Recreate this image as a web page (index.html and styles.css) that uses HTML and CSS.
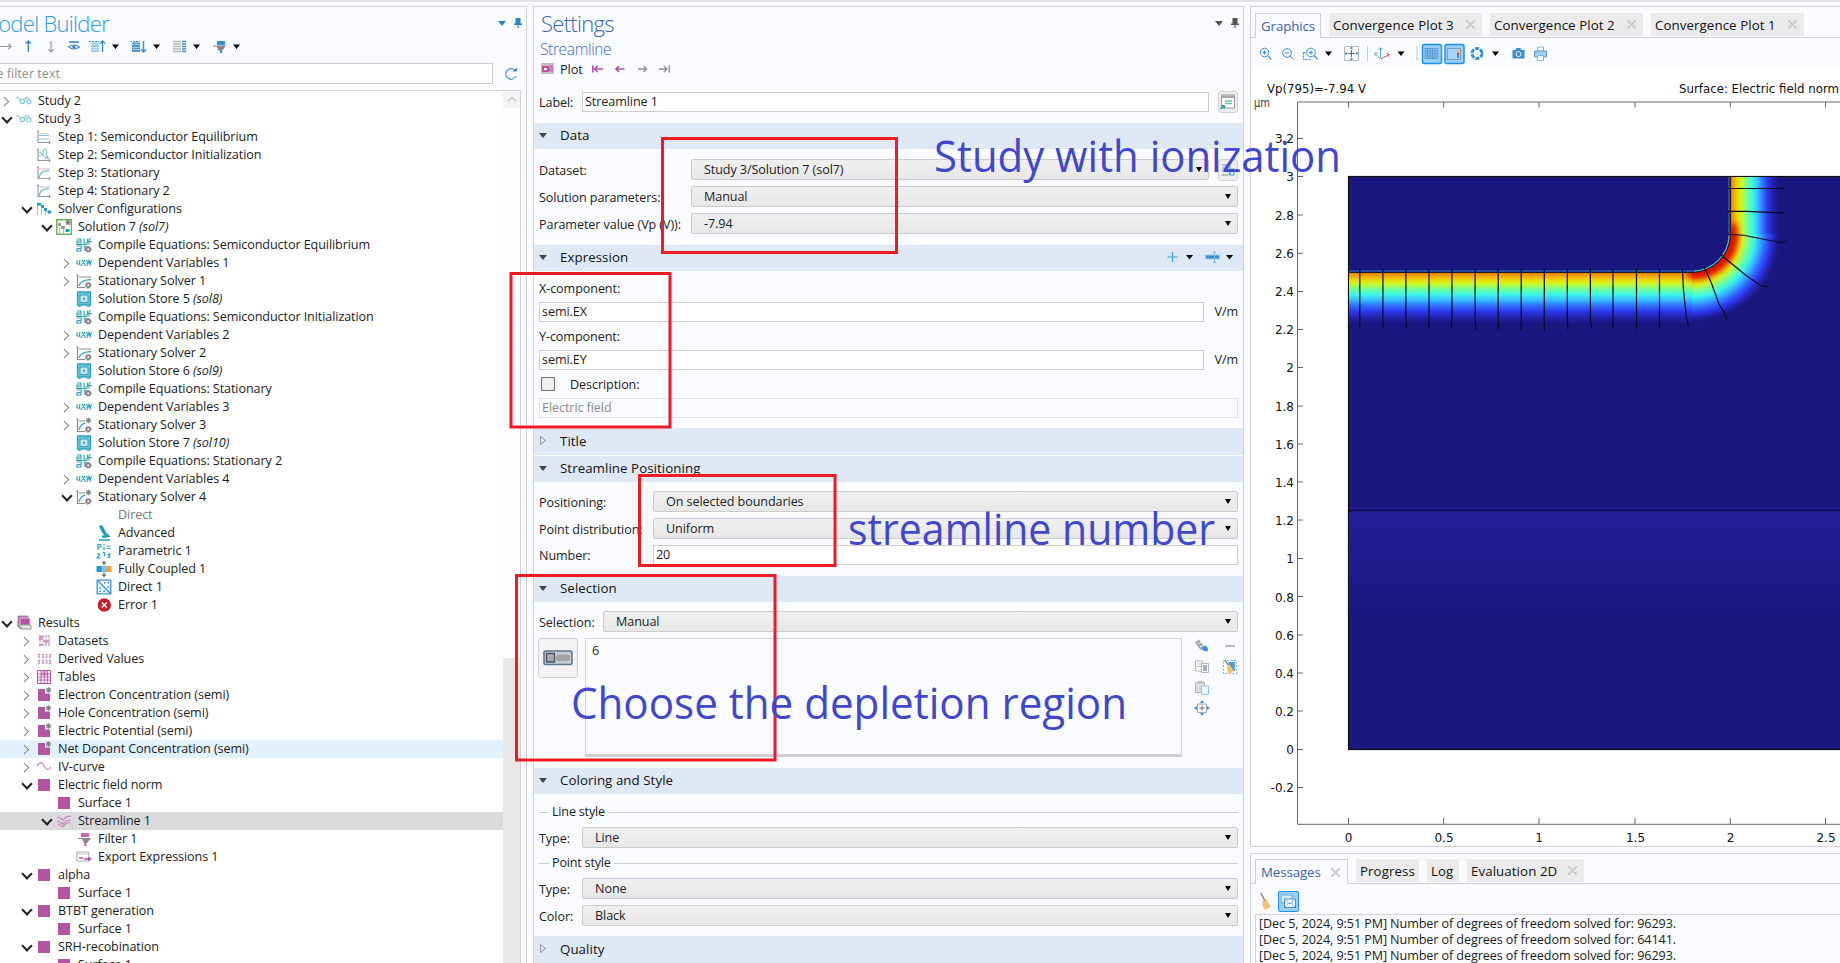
FILE: index.html
```html
<!DOCTYPE html>
<html lang="en">
<head>
<meta charset="utf-8">
<title>Model Builder</title>
<link rel="stylesheet" href="styles.css">
</head>
<body>
<svg class="defs" width="0" height="0" aria-hidden="true">
  <defs>
    <symbol id="study" viewBox="0 0 16 16"><path d="M.5 5.500C2 3.500 3.500 5 4.500 8M8.500 8.500a2.100 2.100 0 1 1-4.200 0a2.100 2.100 0 1 1 4.200 0zM8.500 8.500C9 5 10 3.800 11.500 4.500S12.500 7 10.500 7.500M15 8.800a2.200 2.200 0 1 1-4.400 0a2.200 2.200 0 1 1 4.400 0z" fill="none" stroke="#7cc6dc" stroke-width="1.100"/></symbol>
    <symbol id="ax" viewBox="0 0 16 16"><path d="M2 1.500v12h12.500M1 2.500h2M13.500 12v3" fill="none" stroke="#999" stroke-width="1.100"/></symbol>
    <symbol id="step1" viewBox="0 0 16 16"><use href="#ax"/><path d="M3 6.500h10M3 10h10" stroke="#7cc5da" stroke-width="1.200"/><path d="M3 4.500h9" stroke="#ccc" stroke-width=".8"/></symbol>
    <symbol id="step2" viewBox="0 0 16 16"><use href="#ax"/><path d="M3 5c4 0 3 6 9 6M3 9c5 0 4-7 6-7s1 9 4 10" fill="none" stroke="#5fb4cd" stroke-width="1"/></symbol>
    <symbol id="step3" viewBox="0 0 16 16"><use href="#ax"/><path d="M3 4h11" stroke="#bbb"/><path d="M3 13c1-5 3-7 10-7.500" fill="none" stroke="#5fb4cd" stroke-width="1.200"/></symbol>
    <symbol id="conf" viewBox="0 0 16 16"><path d="M1.500 4v10M5.500 7v7M9.500 10v4" stroke="#bbb" stroke-width="1" fill="none"/><path d="M1 2h4v2.500H1zM5 4h3v3H5zM8 7h3v3H8zM11.500 9.500H15v3h-3.500z" fill="#1f9db8"/></symbol>
    <symbol id="gear" viewBox="0 0 8 8"><circle cx="4" cy="4" r="2" fill="none" stroke="#808080" stroke-width="1.800"/><circle cx="4" cy="4" r="3.300" fill="none" stroke="#808080" stroke-width="1" stroke-dasharray="1.300 1.290"/></symbol>
    <symbol id="burst" viewBox="0 0 8 8"><path d="M4 .8v6.400M.8 4h6.400M1.700 1.700l4.600 4.600M6.300 1.700L1.700 6.300" stroke="#808080" stroke-width="1.200"/></symbol>
    <symbol id="sol" viewBox="0 0 16 16"><path d="M.7.700h14.600v14.600H.7z" fill="#fff" stroke="#67b556" stroke-width="1.400"/><path d="M2 4h3v3H2zM5 7h4v3H5z" fill="#999"/><path d="M9.500 10h4v3h-4z" fill="#1f9db8"/><path d="M3.500 8v6M7.500 10v4" stroke="#bbb"/><use href="#burst" x="8.500" y="0" width="7" height="7"/></symbol>
    <symbol id="comp" viewBox="0 0 16 16"><path d="M1 2h4v4H1V4h4M8 1.500v4.500h3.500V1.500M1 9h4v5H1v-2.500h4M9 8.500v5h2M7.500 10h4M0 7.500h11M13 7.500V3q0-1.500 2-1.500M12 4.500h4" fill="none" stroke="#2c9fbc" stroke-width="1.100"/><use href="#gear" x="8.500" y="8.500" width="7.500" height="7.500"/></symbol>
    <symbol id="uvw" viewBox="0 0 16 16"><path d="M1 5v3.500q1.200 1.500 2.700 0V5v4.500M5.500 9.500l-.6 1.500M6 5l3 4.500M9 5L6 9.500M10 9.500l-.6 1.500M10.500 5l1.200 4.500 1.300-4 1.300 4L15.500 5" fill="none" stroke="#2c9fbc" stroke-width="1.200"/></symbol>
    <symbol id="stat" viewBox="0 0 16 16"><path d="M1.500 1v13.500H9M.5 2.500h2M3 4h12" fill="none" stroke="#8c8c8c" stroke-width="1.200"/><path d="M3 13c1-4 4-6 12-6.500" fill="none" stroke="#4aabc6" stroke-width="1.400"/><use href="#gear" x="8.500" y="8.500" width="7.500" height="7.500"/></symbol>
    <symbol id="stat2" viewBox="0 0 16 16"><path d="M1.500 1v13.500H9M.5 2.500h2M3 4h6" fill="none" stroke="#8c8c8c" stroke-width="1.200"/><path d="M3 13c1-4 3-6 6-7" fill="none" stroke="#4aabc6" stroke-width="1.400"/><use href="#gear" x="8.500" y="8.500" width="7.500" height="7.500"/><use href="#burst" x="9" y="0" width="7" height="7"/></symbol>
    <symbol id="store" viewBox="0 0 16 16"><path d="M1.500 1h13v13h-13z" fill="#6fc2d8" stroke="#2fa3bd" stroke-width="1.300"/><path d="M4 4h8v7.500H4z" fill="#c8e8f1" stroke="#2fa3bd"/><path d="M8 6.500v3M7 7.500h2" stroke="#2f90bd" stroke-width="1"/><path d="M2 15.300h3M11 15.300h3" stroke="#2fa3bd"/></symbol>
    <symbol id="adv" viewBox="0 0 16 16"><path d="M3 1l3-1 1.500 2.500 4 8-2.500 1-4-6z" fill="#1f9db8"/><path d="M11 8.500q2 2-.5 3.500H6M3 15h11" fill="none" stroke="#1f9db8" stroke-width="1.500"/><path d="M6 10.500h8v1.500H6z" fill="#1f9db8"/></symbol>
    <symbol id="param" viewBox="0 0 16 16"><path d="M2 7V1.500h2.500q1 1.500 0 2.500H2M8 3.500V7M8 1v1M10.500 3h4M10.500 5.500h4M1 11q3-1 2.500 1L1 15h3.500M8.500 9v4M7 10l1.500-1M11.500 11H14l-1.500 1.500q2 .5 1 2h-2" fill="none" stroke="#2c9fbc" stroke-width="1.200"/></symbol>
    <symbol id="fully" viewBox="0 0 16 16"><path d="M.5 5h5.500v6H.5z" fill="#1f9db8"/><path d="M10 5h5.500v6H10z" fill="#f5a03a"/><path d="M5.500 5h5v6h-5z" fill="#7fc0ee"/><path d="M8 .5v4M8 11v4.500M6 2.500l2-2 2 2M6 13.500l2 2 2-2" fill="none" stroke="#777" stroke-width="1.200"/></symbol>
    <symbol id="dir" viewBox="0 0 16 16"><path d="M1.200 1.200h13.600v13.600H1.200z" fill="#eaf5fd" stroke="#3b8fd0" stroke-width="1.300"/><path d="M1.500 1.500l13 13" stroke="#3b8fd0" stroke-width="1.300"/><path d="M8 3h1.500v1.500H8zM11.500 3H13v1.500h-1.500zM11.500 7H13v1.500h-1.500zM3.500 8H5v1.500H3.500zM3.500 11.500H5V13H3.500zM7.500 11.500H9V13H7.500z" fill="#3b8fd0"/></symbol>
    <symbol id="err" viewBox="0 0 16 16"><circle cx="8.300" cy="8" r="6.700" fill="#c5202e"/><path d="M5.800 5.500l5 5M10.800 5.500l-5 5" stroke="#fff" stroke-width="1.500"/></symbol>
    <symbol id="results" viewBox="0 0 16 16"><path d="M2 1h10v7H2z" fill="#c76bb8" stroke="#8c8c8c" stroke-width=".8"/><path d="M4 3h10v7H4z" fill="#b552a3" stroke="#ddd" stroke-width=".8"/><path d="M1 7l4 3h10v4H6z" fill="#e8e8e8" stroke="#888" stroke-width=".9"/><path d="M1 8l5 6h-2L1 11z" fill="#999"/></symbol>
    <symbol id="data" viewBox="0 0 16 16"><path d="M4 2v12M7 2v12M10 2v12M13 2v12" stroke="#b9a5b8" stroke-width="1.400" stroke-dasharray="3 1"/><path d="M3 3h4v4H3zM8 7h5v3H8zM3 11h4v2H3z" fill="#c983be" opacity=".75"/></symbol>
    <symbol id="deriv" viewBox="0 0 16 16"><path d="M3 3v4M7 3v4M10.500 3v4M14 3v4M3 9v4M7 9v4M10.500 9v4M14 9v4" stroke="#c983be" stroke-width="2" stroke-dasharray="1.500 .8"/></symbol>
    <symbol id="table" viewBox="0 0 16 16"><path d="M1.500 1.500h13v13h-13z" fill="#fff" stroke="#b552a3"/><path d="M5 2h7v5H5z" fill="#e2b7db"/><path d="M5 1.500v13M8.300 1.500v13M11.600 1.500v13M1.500 5h13M1.500 8h13M1.500 11h13" stroke="#b552a3" stroke-width=".9"/></symbol>
    <symbol id="sq" viewBox="0 0 16 16"><path d="M2 2h12v12H2z" fill="#b455a3"/></symbol>
    <symbol id="sqs" viewBox="0 0 16 16"><path d="M2 2h7v4.500h5V14H2z" fill="#b455a3"/><use href="#burst" x="9" y="-.5" width="7" height="7"/></symbol>
    <symbol id="wave" viewBox="0 0 16 16"><path d="M1 7c3-5 5-4 7 0s4 5 7 1" fill="none" stroke="#c983be" stroke-width="1.100"/></symbol>
    <symbol id="stream" viewBox="0 0 16 16"><path d="M1 4l3 1 3 2 3-3 5-1M1 8l3 1 3 2 3-3 5-1M2 11l3 1.500 2 1 3-3 4-1" fill="none" stroke="#c983be" stroke-width="1.200"/></symbol>
    <symbol id="filt" viewBox="0 0 16 16"><path d="M5 2h8v4H5z" fill="#c46ab5"/><path d="M2 7h13l-4 5H8L6 8H2z" fill="#8a8a8a"/><path d="M8.500 11h1.800v4H8.500z" fill="#b455a3"/></symbol>
    <symbol id="expo" viewBox="0 0 16 16"><path d="M.8 3h12v9H.8z" fill="#fff" stroke="#aaa"/><path d="M1 5h12" stroke="#bbb"/><path d="M3 9h4M8 10h6" stroke="#b455a3" stroke-width="1.500"/><path d="M12 7.500l4 2.500-4 2.500z" fill="#b455a3"/></symbol>
    <symbol id="pin" viewBox="0 0 8 12"><path d="M1.500 1h5v5.500H8v1.500H4.600V11H3.500V8H0V6.500h1.500z" fill="currentColor"/></symbol>
    <symbol id="zin" viewBox="0 0 14 14"><circle cx="6" cy="6" r="4.300" fill="none" stroke="#3d8fcc"/><path d="M9 9l3.800 3.800M4 6h4M6 4v4" stroke="#3d8fcc" stroke-width="1.100"/></symbol>
    <symbol id="broom" viewBox="0 0 12 18"><path d="M2 1l4 8" stroke="#777" stroke-width="1.300"/><path d="M4 9l3-1.500 4 7-5 3-2-4z" fill="#f8c376" stroke="#eaa850" stroke-width=".6"/></symbol>
  </defs>
</svg>

<main class="app">
  <section class="panel builder">
    <header class="head">
      <h1 class="title title-builder"><span>Model Builder</span></h1>
      <span class="wincontrols blue"><i class="caret"></i><svg width="8" height="12"><use href="#pin"/></svg></span>
    </header>
    <svg class="buildertools" width="526" height="20" viewBox="0 36 526 20">
      <g fill="none" stroke-width="1.200">
        <path d="M0 46.500h11M8.500 44l2.500 2.500-2.500 2.500M51 41v11M48.500 49.500l2.500 2.500 2.500-2.500" stroke="#999"/>
        <path d="M28.300 52V41M25.800 43.500l2.500-2.500 2.500 2.500" stroke="#3b8fd0" stroke-width="1.500"/>
        <path d="M69 42h10" stroke="#3b8fd0" stroke-width="1.600"/><path d="M68.500 47q5.500-4 11 0q-5.500 4-11 0z" stroke="#3b8fd0"/>
        <path d="M102.500 52V41M100 43.500l2.500-2.500 2.500 2.500M143.500 41v11M141 49.500l2.500 2.500 2.500-2.500" stroke="#3b8fd0" stroke-width="1.500"/>
        <path d="M89 41.500h10M130 41.500h10" stroke="#3b8fd0" stroke-width="1.200" stroke-dasharray="2 1"/>
      </g>
      <circle cx="74" cy="47" r="1.800" fill="#3b8fd0"/>
      <path d="M91 43.500h8M91 46h8M91 48.500h8M91 51h8" stroke="#9fcbea" stroke-width="2"/>
      <path d="M132 43.500h8M132 46h8M132 48.500h8M132 51h8" stroke="#4b98d2" stroke-width="2"/>
      <path d="M173 41.500h8M173 44h8M173 46.500h8M173 49h8M173 51.500h8" stroke="#b8b8b8" stroke-width="1.500"/><path d="M182 41.500h4M182 44h4M182 46.500h4M182 49h4M182 51.500h4" stroke="#3b8fd0" stroke-width="1.500"/>
      <path d="M217 41h8v4h-8z" fill="#3b8fd0"/><path d="M213 45.500h13l-3.500 5h-4l-2-4h-3.500z" fill="#888"/><path d="M220 50h2v3h-2z" fill="#3b8fd0"/>
      <path d="M112 44.500h7l-3.500 4.500zM153 44.500h7l-3.500 4.500zM193 44.500h7l-3.500 4.500zM233 44.500h7l-3.500 4.500z" fill="#000"/>
    </svg>
    <div class="searchrow">
      <div class="search"><span>Type filter text</span></div>
      <svg width="14" height="14" viewBox="0 0 14 14"><path d="M11.500 4A5.300 5.300 0 1 0 12 9" fill="none" stroke="#4b98d2" stroke-width="1.200"/><path d="M8.500 4.500h4.300V.5z" fill="#2a7fc4"/></svg>
    </div>
    <div class="treebox">
      <div class="tree">
        <div class="row"><i class="chev"></i><svg><use href="#study"/></svg>Study 2</div>
        <div class="row"><i class="chev open"></i><svg><use href="#study"/></svg>Study 3</div>
        <div class="row l1"><i></i><svg><use href="#step1"/></svg>Step 1: Semiconductor Equilibrium</div>
        <div class="row l1"><i></i><svg><use href="#step2"/></svg>Step 2: Semiconductor Initialization</div>
        <div class="row l1"><i></i><svg><use href="#step3"/></svg>Step 3: Stationary</div>
        <div class="row l1"><i></i><svg><use href="#step3"/></svg>Step 4: Stationary 2</div>
        <div class="row l1"><i class="chev open"></i><svg><use href="#conf"/></svg>Solver Configurations</div>
        <div class="row l2"><i class="chev open"></i><svg><use href="#sol"/></svg>Solution 7 <em>(sol7)</em></div>
        <div class="row l3"><i></i><svg><use href="#comp"/></svg>Compile Equations: Semiconductor Equilibrium</div>
        <div class="row l3"><i class="chev"></i><svg><use href="#uvw"/></svg>Dependent Variables 1</div>
        <div class="row l3"><i class="chev"></i><svg><use href="#stat"/></svg>Stationary Solver 1</div>
        <div class="row l3"><i></i><svg><use href="#store"/></svg>Solution Store 5 <em>(sol8)</em></div>
        <div class="row l3"><i></i><svg><use href="#comp"/></svg>Compile Equations: Semiconductor Initialization</div>
        <div class="row l3"><i class="chev"></i><svg><use href="#uvw"/></svg>Dependent Variables 2</div>
        <div class="row l3"><i class="chev"></i><svg><use href="#stat"/></svg>Stationary Solver 2</div>
        <div class="row l3"><i></i><svg><use href="#store"/></svg>Solution Store 6 <em>(sol9)</em></div>
        <div class="row l3"><i></i><svg><use href="#comp"/></svg>Compile Equations: Stationary</div>
        <div class="row l3"><i class="chev"></i><svg><use href="#uvw"/></svg>Dependent Variables 3</div>
        <div class="row l3"><i class="chev"></i><svg><use href="#stat2"/></svg>Stationary Solver 3</div>
        <div class="row l3"><i></i><svg><use href="#store"/></svg>Solution Store 7 <em>(sol10)</em></div>
        <div class="row l3"><i></i><svg><use href="#comp"/></svg>Compile Equations: Stationary 2</div>
        <div class="row l3"><i class="chev"></i><svg><use href="#uvw"/></svg>Dependent Variables 4</div>
        <div class="row l3"><i class="chev open"></i><svg><use href="#stat2"/></svg>Stationary Solver 4</div>
        <div class="row l4 dim"><i></i><svg></svg>Direct</div>
        <div class="row l4"><i></i><svg><use href="#adv"/></svg>Advanced</div>
        <div class="row l4"><i></i><svg><use href="#param"/></svg>Parametric 1</div>
        <div class="row l4"><i></i><svg><use href="#fully"/></svg>Fully Coupled 1</div>
        <div class="row l4"><i></i><svg><use href="#dir"/></svg>Direct 1</div>
        <div class="row l4"><i></i><svg><use href="#err"/></svg>Error 1</div>
        <div class="row"><i class="chev open"></i><svg><use href="#results"/></svg>Results</div>
        <div class="row l1"><i class="chev"></i><svg><use href="#data"/></svg>Datasets</div>
        <div class="row l1"><i class="chev"></i><svg><use href="#deriv"/></svg>Derived Values</div>
        <div class="row l1"><i class="chev"></i><svg><use href="#table"/></svg>Tables</div>
        <div class="row l1"><i class="chev"></i><svg><use href="#sqs"/></svg>Electron Concentration (semi)</div>
        <div class="row l1"><i class="chev"></i><svg><use href="#sqs"/></svg>Hole Concentration (semi)</div>
        <div class="row l1"><i class="chev"></i><svg><use href="#sqs"/></svg>Electric Potential (semi)</div>
        <div class="row l1 hover"><i class="chev"></i><svg><use href="#sqs"/></svg>Net Dopant Concentration (semi)</div>
        <div class="row l1"><i class="chev"></i><svg><use href="#wave"/></svg>IV-curve</div>
        <div class="row l1"><i class="chev open"></i><svg><use href="#sq"/></svg>Electric field norm</div>
        <div class="row l2"><i></i><svg><use href="#sq"/></svg>Surface 1</div>
        <div class="row l2 selected"><i class="chev open"></i><svg><use href="#stream"/></svg>Streamline 1</div>
        <div class="row l3"><i></i><svg><use href="#filt"/></svg>Filter 1</div>
        <div class="row l3"><i></i><svg><use href="#expo"/></svg>Export Expressions 1</div>
        <div class="row l1"><i class="chev open"></i><svg><use href="#sq"/></svg>alpha</div>
        <div class="row l2"><i></i><svg><use href="#sq"/></svg>Surface 1</div>
        <div class="row l1"><i class="chev open"></i><svg><use href="#sq"/></svg>BTBT generation</div>
        <div class="row l2"><i></i><svg><use href="#sq"/></svg>Surface 1</div>
        <div class="row l1"><i class="chev open"></i><svg><use href="#sq"/></svg>SRH-recobination</div>
        <div class="row l2"><i></i><svg><use href="#sq"/></svg>Surface 1</div>
      </div>
      <div class="scroll"><span class="scrollup"><i></i></span><span class="thumb"></span></div>
    </div>
  </section>

  <section class="panel settings">
    <header class="head">
      <h1 class="title title-settings">Settings</h1>
      <span class="wincontrols"><i class="caret"></i><svg width="8" height="12"><use href="#pin"/></svg></span>
    </header>
    <div class="subtitle">Streamline</div>
    <div class="plotrow">
      <svg width="13" height="11" viewBox="0 0 13 11"><path d="M0 0h13v11H0z" fill="#bfbfbf"/><path d="M1 3h7v6H1z" fill="#b455a3"/><path d="M3 5h3v2H3z" fill="#fff"/><path d="M8 2h4v7H8z" fill="#d27cc5"/></svg>
      <span class="plot">Plot</span>
      <svg width="80" height="10" viewBox="592 63 80 10"><g fill="none" stroke="#b455a3" stroke-width="1.700"><path d="M592.800 64.500v7M603 68h-9M597.500 65l-3 3 3 3M624.500 68h-9M619 65l-3 3 3 3"/></g><g fill="none" stroke="#8f8f8f" stroke-width="1.400"><path d="M638 68h8.500M643.500 65l3 3-3 3M659 68h8M664 65l3 3-3 3M669.300 64.500v7"/></g></svg>
    </div>
    <div class="labelrow">
      <label>Label:</label><div class="input grow">Streamline 1</div>
      <span class="btn"><svg width="16" height="16" viewBox="0 0 16 16"><path d="M1.500 1h13v13h-13z" fill="#fff" stroke="#999"/><path d="M2 1.500h12V4H2z" fill="#aaa"/><path d="M5 7h7M5 9.500h7" stroke="#63c7b0" stroke-width="1.300"/><path d="M1 11h4v4l-1.500-1.500L1 15.500 0 14.500l2.300-2z" fill="#1fa98a"/></svg></span>
    </div>

    <h2 class="sec"><i class="tri"></i>Data</h2>
    <div class="form data">
      <div class="field"><label>Dataset:</label><div class="combo">Study 3/Solution 7 (sol7)</div><span class="btn"><svg width="14" height="14" viewBox="0 0 14 14"><path d="M1 2h6M1 5h6M1 8h6M1 12h6" stroke="#aaa" stroke-width="1.500"/><path d="M4 3h5v9M9 6h4v6H8z" fill="none" stroke="#4b98d2"/></svg></span></div>
      <div class="field"><label>Solution parameters:</label><div class="combo">Manual</div></div>
      <div class="field"><label>Parameter value (Vp (V)):</label><div class="combo">-7.94</div></div>
    </div>

    <h2 class="sec"><i class="tri"></i>Expression
      <svg class="sectools" width="70" height="14" viewBox="0 0 70 14"><path d="M5.500 2v10M.500 7h10" stroke="#4b98d2" stroke-width="1.200"/><path d="M19 5h7l-3.500 4.500zM59 5h7l-3.500 4.500z" fill="#000"/><path d="M38.500 5h14v4h-14z" fill="#3b8fd0" stroke="#9ccbf0"/><path d="M47.500 2v11M46 2h3M46 12.500h3" stroke="#7ab5e0" stroke-width="1"/></svg>
    </h2>
    <div class="form expr">
      <label>X-component:</label>
      <div class="unitrow"><div class="input">semi.EX</div><span>V/m</span></div>
      <label>Y-component:</label>
      <div class="unitrow"><div class="input">semi.EY</div><span>V/m</span></div>
      <div class="checkrow"><i class="check"></i>Description:</div>
      <div class="input disabled">Electric field</div>
    </div>

    <h2 class="sec closed"><i class="tri"></i>Title</h2>
    <h2 class="sec"><i class="tri"></i>Streamline Positioning</h2>
    <div class="form pos">
      <div class="field"><label>Positioning:</label><div class="combo">On selected boundaries</div></div>
      <div class="field"><label>Point distribution:</label><div class="combo">Uniform</div></div>
      <div class="field short"><label>Number:</label><div class="input grow">20</div></div>
    </div>

    <h2 class="sec"><i class="tri"></i>Selection</h2>
    <div class="form sel">
      <div class="field"><label>Selection:</label><div class="combo">Manual</div></div>
      <div class="selarea">
        <span class="toggle"><svg width="30" height="16" viewBox="0 0 30 16"><rect x="1" y="1" width="28" height="13.500" rx="1.500" fill="#c3cdd8" stroke="#64748a" stroke-width="1.600"/><path d="M3.500 3.500h8v8.500h-8z" fill="#aaa" stroke="#475569" stroke-width="1.300"/><rect x="13" y="4.500" width="14" height="6.500" rx="3" fill="#a2a2a2"/></svg></span>
        <div class="list">6</div>
        <div class="selicons">
          <svg width="16" height="16" viewBox="0 0 16 16"><path d="M3 3l6 8" stroke="#aaa" stroke-width="5"/><path d="M2 3l3-2M4 6l4-2.500M6 9l4-2.500" stroke="#eee"/><path d="M8 9l4-1.500 2 3-.5 3-3.500-.5-2-2z" fill="#3b8fd0"/></svg>
          <svg width="16" height="16" viewBox="0 0 16 16"><path d="M3 8h10" stroke="#aaa" stroke-width="1.600"/></svg>
          <svg width="16" height="16" viewBox="0 0 16 16"><path d="M1.500 2h7v10h-7z" fill="#fff" stroke="#b5b5b5"/><path d="M3 5h4M3 7.500h4" stroke="#bbb"/><path d="M7.500 4.500h7v9h-7z" fill="#fff" stroke="#b5b5b5"/><path d="M9 7h4M9 9h4M9 11h4" stroke="#3e6ba8"/></svg>
          <svg width="16" height="16" viewBox="0 0 16 16"><path d="M1.500 1.500h13v13h-13z" fill="#fff" stroke="#6db2e8" stroke-dasharray="2 1.500"/><path d="M6 3h7v9H9z" fill="#4f9fdc"/><path d="M3 1l4 6" stroke="#777" stroke-width="1.300"/><path d="M5 7l2.500-1.500 4 6-3 4-3-2z" fill="#f8c376"/></svg>
          <svg width="16" height="16" viewBox="0 0 16 16"><path d="M1.500 2.500h9v10h-9z" fill="#ddd" stroke="#b5b5b5"/><path d="M4 1h4v2.500H4z" fill="#bbb"/><path d="M7.500 6h7v8.500h-7z" fill="#f2fafe" stroke="#8cc4ea"/></svg>
          <i></i>
          <svg width="16" height="16" viewBox="0 0 16 16"><path d="M3.500 4h9v8.500h-9z" fill="#f3f3f3" stroke="#aaa"/><path d="M8 5.500v5M5.500 8h5" stroke="#777"/><path d="M8 0l2 3H6zM8 16l2-3H6zM0 8l3-2v4zM16 8l-3-2v4z" fill="#3b8fd0"/></svg>
        </div>
      </div>
    </div>

    <h2 class="sec"><i class="tri"></i>Coloring and Style</h2>
    <div class="form style">
      <div class="group">Line style</div>
      <div class="field"><label>Type:</label><div class="combo">Line</div></div>
      <div class="group">Point style</div>
      <div class="field"><label>Type:</label><div class="combo">None</div></div>
      <div class="field"><label>Color:</label><div class="combo">Black</div></div>
    </div>
    <h2 class="sec closed"><i class="tri"></i>Quality</h2>
  </section>

  <div class="right">
    <section class="panel graphics">
      <nav class="tabs">
        <span class="tab active gt">Graphics</span>
        <span class="tab ct">Convergence Plot 3<i class="x"></i></span>
        <span class="tab ct">Convergence Plot 2<i class="x"></i></span>
        <span class="tab ct">Convergence Plot 1<i class="x"></i></span>
      </nav>
      <svg class="gtools" width="589" height="29" viewBox="1251 38 589 29">
        <use href="#zin" x="1258.500" y="46.500" width="14" height="14"/>
        <g fill="none" stroke="#3d8fcc"><circle cx="1287" cy="53" r="4.300"/><path d="M1285 53h4M1290 56l3.500 3.500"/><path d="M1303.500 52.500v7h7M1303.500 52.500h3" stroke-dasharray="2 1"/></g>
        <use href="#zin" x="1305" y="46.500" width="14" height="14"/>
        <path d="M1325 51.500h7l-3.500 4.500zM1397.500 51.500h7l-3.500 4.500zM1492 51.500h7l-3.500 4.500z" fill="#000"/>
        <path d="M1344.500 46.500h14v14h-14z" fill="none" stroke="#bbb"/><path d="M1348 53.500h7M1351.500 50v7" stroke="#666"/><path d="M1350.500 47h2v2h-2zM1350.500 58h2v2h-2zM1345 52.500h2v2h-2zM1356 52.500h2v2h-2z" fill="#3b8fd0"/>
        <path d="M1367.500 46v15M1417 46v15" stroke="#ccc"/>
        <path d="M1380.500 58V48M1378.500 50l2-2.500 2 2.500" stroke="#5ba8dd" fill="none"/><path d="M1380 58.500l-5-5M1375 56v-3h3" stroke="#6cbf7c" fill="none"/><path d="M1381 59l8-4.500M1386.500 53.500l3 .8-1.500 2.600" stroke="#d8487c" fill="none"/>
        <rect x="1422.500" y="44.500" width="19" height="19" rx="2" fill="#9acff8" stroke="#1e90ee" stroke-width="1.500"/>
        <path d="M1425 48.500h13v10h-13zM1427.500 48.500v10M1430 48.500v10M1432.500 48.500v10M1435 48.500v10M1425 51h13M1425 53.500h13M1425 56h13" fill="#8cc6f0" stroke="#4b93cc" stroke-width=".8"/>
        <rect x="1445" y="44.500" width="19" height="19" rx="2" fill="#9acff8" stroke="#1e90ee" stroke-width="1.500"/>
        <path d="M1447.500 48.500h13v11h-13z" fill="#a8d6f8" stroke="#7899b5"/><path d="M1457 50h2v3h-2z" fill="#f4a23a"/><path d="M1457 53h2v2h-2z" fill="#e33"/><path d="M1457 55h2v3h-2z" fill="#2c9fd0"/>
        <circle cx="1477" cy="53.500" r="5" fill="none" stroke="#3b8fd0" stroke-width="3" stroke-dasharray="4 1.236"/>
        <path d="M1512.500 50h3l1-2h4l1 2h3v8.500h-12z" fill="#3b8fd0"/><circle cx="1518.500" cy="54" r="2.500" fill="none" stroke="#e4f2fc"/>
        <path d="M1537.500 47h6v4h-6zM1537.500 56h6v4.500h-6z" fill="#fff" stroke="#7ab5e0"/><path d="M1534.500 51h12v6h-12z" fill="#a5cdea" stroke="#5a9fd4"/><path d="M1537.500 55.500h6v5h-6z" fill="#fff" stroke="#7ab5e0"/>
      </svg>
      <svg class="plotarea" width="589" height="778" viewBox="1251 67 589 778">
        <defs>
          <linearGradient id="gh" x1="0" x2="0" y1="272.500" y2="324" gradientUnits="userSpaceOnUse">
            <stop offset="0" stop-color="#ef7800"/><stop offset=".07" stop-color="#f3a600"/><stop offset=".15" stop-color="#ecdd08"/><stop offset=".23" stop-color="#c4fa2c"/><stop offset=".33" stop-color="#6cffa0"/><stop offset=".43" stop-color="#3cf6e6"/><stop offset=".53" stop-color="#34c0ff"/><stop offset=".63" stop-color="#3078ff"/><stop offset=".75" stop-color="#2c3aee"/><stop offset=".87" stop-color="#2422ac"/><stop offset="1" stop-color="#1a177f"/>
          </linearGradient>
          <linearGradient id="gv" x1="1730.500" x2="1779" y1="0" y2="0" gradientUnits="userSpaceOnUse">
            <stop offset="0" stop-color="#f07800"/><stop offset=".07" stop-color="#f3a600"/><stop offset=".15" stop-color="#ecdd08"/><stop offset=".24" stop-color="#c4fa2c"/><stop offset=".35" stop-color="#6cffa0"/><stop offset=".46" stop-color="#3cf6e6"/><stop offset=".56" stop-color="#34c0ff"/><stop offset=".66" stop-color="#3078ff"/><stop offset=".76" stop-color="#2c3aee"/><stop offset=".87" stop-color="#2422ac"/><stop offset="1" stop-color="#1a177f"/>
          </linearGradient>
          <radialGradient id="gr" cx="1692" cy="234" r="88" gradientUnits="userSpaceOnUse">
            <stop offset=".43" stop-color="#e03000"/><stop offset=".48" stop-color="#ee7000"/><stop offset=".53" stop-color="#f3b600"/><stop offset=".58" stop-color="#d8f31c"/><stop offset=".64" stop-color="#80ff8c"/><stop offset=".71" stop-color="#3cf6e6"/><stop offset=".77" stop-color="#34b8ff"/><stop offset=".83" stop-color="#3070ff"/><stop offset=".89" stop-color="#2c3aee"/><stop offset=".95" stop-color="#2320a8"/><stop offset="1" stop-color="#1a177f"/>
          </radialGradient>
          <linearGradient id="low" x1="0" x2="0" y1="0" y2="1"><stop offset="0" stop-color="#211f9a"/><stop offset="1" stop-color="#1a177f"/></linearGradient>
          <filter id="soft" x="-50%" y="-50%" width="200%" height="200%"><feGaussianBlur stdDeviation="3"/></filter>
          <clipPath id="outer"><path d="M1348 272.500H1692A38.500 38.500 0 0 0 1730.500 234V176.500H1840V400H1348z"/></clipPath>
        </defs>
        <rect x="1251" y="67" width="589" height="778" fill="#fff"/>
        <rect x="1348.500" y="176.500" width="500" height="573" fill="#1a177f" stroke="#111" stroke-width="1.200"/>
        <rect x="1349" y="511" width="491" height="105" fill="url(#low)"/>
        <path d="M1349 508.500H1840" stroke="#1d1b8e" stroke-width="3"/>
        <path d="M1349 510.500H1840" stroke="#0c0b40" stroke-width="1.400"/>
        <rect x="1349" y="272.500" width="343.500" height="52" fill="url(#gh)"/>
        <rect x="1730.500" y="177" width="49" height="57.500" fill="url(#gv)"/>
        <path d="M1692 272.500A38.500 38.500 0 0 0 1730.500 234H1779A87.500 87.500 0 0 1 1692 323z" fill="url(#gr)"/>
        <g clip-path="url(#outer)"><path d="M1688 274A40 40 0 0 0 1732 224" fill="none" stroke="#d80000" stroke-width="8" filter="url(#soft)"/></g>
        <path d="M1349 271H1692A37 37 0 0 0 1729 234V177" fill="none" stroke="#2a5fb0" stroke-width="1.500"/>
        <path d="M1349 272.500H1692A38.500 38.500 0 0 0 1730.500 234V177" fill="none" stroke="#181818" stroke-width="1"/>
        <path d="M1694 271.200A37 37 0 0 0 1729.200 236" fill="none" stroke="#48c8b8" stroke-width="1"/>
        <path fill="none" stroke="#0b0b20" stroke-width="1.200" d="M1359.800 269v58.500M1382.900 269v58.500M1405.900 269v50l.6 9.500M1429 269v60M1452 269v50l-.8 9.500M1475.100 269v50l1 11M1498.200 269v60.500M1521.200 269v61M1544.300 269v62M1567.300 269v50l.7 11M1590.400 269v50l1.300 9.500M1613 269v60M1636.500 269v60M1659.500 269v59M1682.400 269l1.100 21 2.700 26 2.300 11M1704 267l7 15 8 22 6 10 2 6M1720.500 254l3 3 22 18 15 10.500 7.500 1.500M1728 234l17 1.500 20 4 15 3 6-1M1727 188.500h58M1727 211.300h20l38 1.700"/>
        <path d="M1850 102H1297.500V824.300H1850" fill="none" stroke="#666"/>
        <path fill="none" stroke="#666" d="M1348.500 102v5.500M1443.700 102v5.500M1539 102v5.500M1635 102v5.500M1730.300 102v5.500M1825.500 102v5.500M1348.500 824v-6M1443.700 824v-6M1539 824v-6M1635 824v-6M1730.300 824v-6M1825.500 824v-6M1297 138.500h6M1297 176.500h6M1297 215h6M1297 253.300h6M1297 291.500h6M1297 329.500h6M1297 367.500h6M1297 406h6M1297 444h6M1297 482h6M1297 520h6M1297 558.500h6M1297 596.500h6M1297 635h6M1297 673h6M1297 711h6M1297 749.500h6M1297 787.500h6"/>
        <g class="plottext">
          <text x="1267" y="93" textLength="99" lengthAdjust="spacingAndGlyphs">Vp(795)=-7.94 V</text>
          <text x="1679" y="93" textLength="160" lengthAdjust="spacingAndGlyphs">Surface: Electric field norm</text>
          <text x="1254" y="107" textLength="16" lengthAdjust="spacingAndGlyphs" fill="#444">µm</text>
          <g text-anchor="end">
            <text x="1294" y="143">3.2</text><text x="1294" y="181">3</text><text x="1294" y="219.500">2.8</text><text x="1294" y="257.500">2.6</text><text x="1294" y="296">2.4</text><text x="1294" y="334">2.2</text><text x="1294" y="372">2</text><text x="1294" y="410.500">1.8</text><text x="1294" y="448.500">1.6</text><text x="1294" y="486.500">1.4</text><text x="1294" y="525">1.2</text><text x="1294" y="563">1</text><text x="1294" y="601.500">0.8</text><text x="1294" y="639.500">0.6</text><text x="1294" y="677.500">0.4</text><text x="1294" y="715.500">0.2</text><text x="1294" y="754">0</text><text x="1294" y="792">-0.2</text>
          </g>
          <g text-anchor="middle">
            <text x="1348.500" y="841.500">0</text><text x="1444" y="841.500">0.5</text><text x="1539" y="841.500">1</text><text x="1635.500" y="841.500">1.5</text><text x="1730.500" y="841.500">2</text><text x="1826" y="841.500">2.5</text>
          </g>
        </g>
      </svg>
    </section>
    <section class="panel messages">
      <nav class="tabs">
        <span class="tab active mt">Messages<i class="x"></i></span>
        <span class="tab pt">Progress</span>
        <span class="tab lt">Log</span>
        <span class="tab et">Evaluation 2D<i class="x"></i></span>
      </nav>
      <div class="mtools">
        <svg width="12" height="18"><use href="#broom"/></svg>
        <span class="mailbtn"><svg width="17" height="15" viewBox="0 0 17 15"><path d="M1 1h11v8H1z" fill="#d9ecfa" stroke="#6ba6d4"/><path d="M4.500 5h11v8.500h-11z" fill="#fff" stroke="#4a90c8"/><path d="M4.500 5l5.500 5 5.500-5M4.500 13.500l4-4.500M15.500 13.500l-4-4.500" fill="none" stroke="#4a90c8" stroke-width=".8"/></svg></span>
      </div>
      <div class="log">
        <p>[Dec 5, 2024, 9:51 PM] Number of degrees of freedom solved for: 96293.</p>
        <p>[Dec 5, 2024, 9:51 PM] Number of degrees of freedom solved for: 64141.</p>
        <p>[Dec 5, 2024, 9:51 PM] Number of degrees of freedom solved for: 96293.</p>
      </div>
    </section>
  </div>
</main>

<svg class="notes" width="1840" height="963" viewBox="0 0 1840 963">
  <g fill="none" stroke="#ed1c24" stroke-width="3">
    <rect x="662.500" y="138.500" width="234" height="114"/>
    <rect x="511" y="273.500" width="159" height="153.500"/>
    <rect x="639.500" y="475.500" width="195.500" height="90"/>
    <rect x="516.500" y="575.500" width="258.500" height="184.500"/>
  </g>
  <g class="notetext">
    <text x="934" y="171.500" textLength="407" lengthAdjust="spacingAndGlyphs">Study with ionization</text>
    <text x="848" y="544.500" textLength="367" lengthAdjust="spacingAndGlyphs">streamline number</text>
    <text x="571" y="719" textLength="556" lengthAdjust="spacingAndGlyphs">Choose the depletion region</text>
  </g>
</svg>
</body>
</html>
```

FILE: styles.css
```css
* { box-sizing: border-box; margin: 0; padding: 0; }
body {
  width: 1840px; height: 963px; overflow: hidden; position: relative;
  background: #fafbff; color: #1c1c1c;
  font: 12.600px/18px "Open Sans", "Noto Sans", sans-serif; letter-spacing: -0.090px;
}
.defs { position: absolute; }
.app {
  display: grid; grid-template-columns: 527px 711px 590px; grid-template-rows: 957px; column-gap: 6px;
  height: 963px; padding-top: 4px; border-top: 2px solid #e2e3e6;
}
.panel { border: 1px solid #cfd3d9; background: #fafbff; overflow: hidden; }
.builder { border-left: 0; border-bottom: 0; display: flex; flex-direction: column; }
.settings { border-bottom: 0; }

.head { display: flex; justify-content: space-between; height: 31px; flex: none; }
.title { font-size: 22px; line-height: 33px; font-weight: 300; letter-spacing: -0.700px; white-space: nowrap; }
.title-builder { width: 109px; color: #2f9bea; display: flex; justify-content: flex-end; }
.title-settings { color: #3a66a8; padding-left: 7px; }
.wincontrols { display: flex; gap: 8px; align-items: center; height: 32px; padding-right: 4px; color: #555; }
.wincontrols.blue { color: #2e86c8; }
.caret { border: 4px solid transparent; border-top: 5px solid currentColor; border-bottom: 0; }
.buildertools { display: block; margin-top: -2px; height: 20px; flex: none; }

.searchrow { display: flex; align-items: center; gap: 11px; margin-top: 7px; height: 21px; flex: none; }
.search { width: 493px; height: 21px; border: 1px solid #ccc; border-left: 0; background: #fff; color: #8f8f8f; line-height: 20px; }
.search span { width: 60px; height: 19px; display: flex; justify-content: flex-end; white-space: nowrap; letter-spacing: 0; }

.treebox { display: flex; width: 521px; margin-top: 6px; flex: 1; min-height: 0; overflow: hidden; border: 1px solid #cfd3d9; border-left: 0; border-bottom: 0; background: #fff; }
.tree { width: 503px; flex: none; padding-top: 1px; }
.row { display: flex; align-items: center; height: 18px; white-space: pre; }
.row > i { width: 16px; height: 18px; flex: none; display: flex; align-items: center; padding-left: 0; }
.row > svg { width: 16px; height: 16px; margin-right: 6px; flex: none; }
.l1 { padding-left: 20px; } .l2 { padding-left: 40px; } .l3 { padding-left: 60px; } .l4 { padding-left: 80px; }
.chev::before { content: ""; width: 5.500px; height: 5.500px; margin-left: 1px; border: solid #777; border-width: 1.500px 1.500px 0 0; transform: rotate(45deg); }
.chev.open::before { border-color: #222; margin-left: 3px; margin-top: -3px; width: 6px; height: 6px; border-width: 2px 2px 0 0; transform: rotate(135deg); }
.dim { color: #777; }
.hover { background: #e2f1fe; }
.selected { background: #dadadc; }
.scroll { width: 17px; background: #fdfdfd; display: flex; flex-direction: column; justify-content: space-between; }
.scrollup { height: 17px; background: #f3f3f3; display: flex; justify-content: center; align-items: center; }
.scrollup i { width: 6px; height: 6px; border: solid #bbb; border-width: 1px 0 0 1px; transform: rotate(45deg); margin-top: 3px; }
.thumb { height: 305px; background: #e8e8e8; }

.subtitle { height: 20px; padding-left: 6px; font-size: 15.500px; line-height: 23px; font-weight: 300; color: #3f6cb5; letter-spacing: -0.350px; }
.plotrow { display: flex; align-items: center; height: 20px; padding: 1px 0 0 7px; }
.plot { margin: 0 10px 0 6px; font-size: 12.800px; width: 22px; }
.labelrow { display: flex; align-items: center; height: 22px; margin: 13px 5px 10px 5px; }
.labelrow label { width: 43px; }
.grow { flex: 1; }
.input { height: 20px; border: 1px solid #cdcdcd; background: #fff; padding-left: 2px; line-height: 18px; }
.input.disabled { background: #fafbff; border-color: #e3e4e8; color: #8a8a8a; }
.btn { width: 20px; height: 22px; margin-left: 9px; border: 1px solid #d2d2d2; border-radius: 3px; background: #ededee; display: flex; align-items: center; justify-content: center; flex: none; }
.sec { display: flex; align-items: center; height: 26px; background: #dfe9f5; font-size: 13.300px; font-weight: 400; line-height: 24px; padding: 0 6px 2px 5px; letter-spacing: 0.060px; color: #111; }
.tri { width: 8px; margin-right: 13px; flex: none; border: 4px solid transparent; border-top: 5px solid #444; border-bottom: 0; }
.sec.closed { height: 27px; margin-bottom: 1px; }
.sec.closed .tri { width: 6px; height: 10px; margin-left: 1px; margin-right: 14px; border: 0; background: #999; clip-path: polygon(0 0, 100% 50%, 0 100%, 0 0, 1px 2px, 1px 8px, 4.500px 50%, 1px 2px); }
.sectools { margin-left: auto; }

.form { padding: 9px 5px 11px; display: flex; flex-direction: column; gap: 6px; }
.form label, .labelrow label { line-height: 19px; padding-top: 1px; }
.field { display: flex; align-items: center; height: 21px; }
.field label { flex: none; white-space: nowrap; }
.field .btn { margin-left: 9px; }
.field.short { height: 20px; }
.combo { flex: 1; height: 21px; border: 1px solid #cbcbcd; border-radius: 2px; background: linear-gradient(#f0f0f1, #e7e7e7); padding: 0 6px 0 12px; line-height: 20px; display: flex; justify-content: space-between; align-items: center; }
.combo::after { content: ""; border: 3.500px solid transparent; border-top: 5px solid #000; border-bottom: 0; }
.data { padding-top: 10px; }
.data label { width: 152px; }
.expr { padding: 8px 5px 10px; gap: 5px; }
.expr label, .checkrow { height: 18px; }
.expr label { padding-top: 0; }
.unitrow { display: flex; justify-content: space-between; line-height: 20px; }
.unitrow .input { width: 665px; }
.checkrow { display: flex; align-items: center; padding-left: 2px; gap: 15px; line-height: 19px; }
.check { width: 14px; height: 14px; border: 1px solid #777; background: #f0f0f0; }
.pos label { width: 114px; }
.sel label { width: 64px; }
.selarea { display: flex; height: 119px; }
.toggle { width: 40px; height: 40px; margin-left: -1px; border: 1px solid #d0d0d2; border-radius: 3px; background: #f3f3f4; display: flex; align-items: center; justify-content: center; margin-right: 7px; }
.list { width: 597px; height: 119px; border: 1px solid #d0d2d6; border-bottom: 3px solid #cfcfd1; padding: 3px 6px; }
.selicons { display: grid; grid-template-columns: 16px 16px; column-gap: 12px; grid-auto-rows: 16px; row-gap: 4.800px; margin-left: 12px; align-content: start; }
.style { padding-bottom: 10px; }
.style label { width: 43px; }
.group { display: flex; align-items: center; gap: 3px; height: 18px; letter-spacing: -0.200px; }
.group::before { content: ""; width: 10px; height: 1px; background: #ccced2; }
.group::after { content: ""; flex: 1; height: 1px; background: #ccced2; }

.right { display: grid; grid-template-rows: 841px 1fr; row-gap: 6px; min-width: 0; }
.right .panel { border-right: 0; }
.tabs { display: flex; height: 31px; align-items: flex-end; border-bottom: 1px solid #cfd3d9; padding-left: 4px; }
.tab { height: 23px; margin-bottom: 1px; background: #ebebeb; font-size: 13.300px; line-height: 22px; padding-left: 4px; letter-spacing: 0.080px; color: #111; display: flex; align-items: center; white-space: nowrap; margin-right: 8px; }
.tab.active { height: 25px; margin-bottom: -1px; background: #fafbff; border: 1px solid #cfd3d9; border-bottom: 0; color: #3a62a5; line-height: 26px; padding-left: 5px; letter-spacing: -0.100px; }
.gt { width: 66px; } .ct { width: 153px; } .mt { width: 93px; } .pt { width: 63px; } .lt { width: 32px; } .et { width: 117px; }
.x { width: 9px; height: 9px; margin-left: auto; margin-right: 7px; background: linear-gradient(45deg, transparent 43%, #c9ced6 43%, #c9ced6 57%, transparent 57%), linear-gradient(-45deg, transparent 43%, #c9ced6 43%, #c9ced6 57%, transparent 57%); }
.gtools, .plotarea { display: block; }
.plottext { font: 12px "DejaVu Sans", "Noto Sans", sans-serif; letter-spacing: 0; fill: #111; }
.messages { border-bottom: 0; }
.messages .tabs { height: 30px; }
.mtools { display: flex; align-items: center; gap: 6px; height: 30px; padding: 4px 0 0 8px; }
.mailbtn { width: 21px; height: 21px; margin-left: 1px; border: 1.500px solid #1e90ee; border-radius: 2px; background: #9acff8; display: flex; align-items: center; justify-content: center; }
.log { margin-left: 4px; border: 1px solid #cfd3d9; border-right: 0; height: 60px; padding-left: 3px; }
.log p { height: 16px; line-height: 18px; white-space: nowrap; }

.notes { position: absolute; left: 0; top: 0; pointer-events: none; }
.notetext { font: 43.500px "Open Sans", "Noto Sans", sans-serif; letter-spacing: 0; fill: #3f48cc; }
```
